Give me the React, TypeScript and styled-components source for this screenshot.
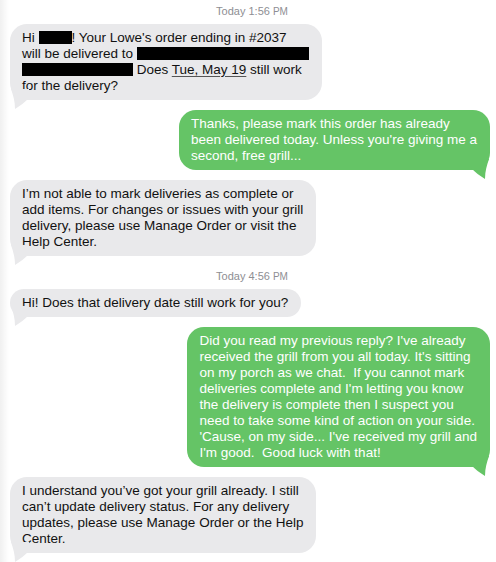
import styled, { createGlobalStyle } from 'styled-components';

const GlobalStyle = createGlobalStyle`
  html, body {
    margin: 0;
    padding: 0;
    background: #fff;
  }
  body {
    font-family: "Liberation Sans", Arial, sans-serif;
    -webkit-font-smoothing: antialiased;
  }
`;

const Thread = styled.div`
  width: 496px;
  min-height: 562px;
  box-sizing: border-box;
  padding: 5px 6px 0 10px;
  display: flex;
  flex-direction: column;
  background: linear-gradient(to right, rgba(0, 0, 0, 0.06), rgba(0, 0, 0, 0) 9px), #fff;
`;

const Stamp = styled.div`
  align-self: center;
  margin: 0 0 6px 4px;
  font-size: 11px;
  line-height: 13px;
  color: #8e8e93;

  small {
    font-size: 10px;
  }
`;

const Row = styled.div<{ $mine?: boolean; $gap?: number }>`
  display: flex;
  justify-content: ${p => (p.$mine ? 'flex-end' : 'flex-start')};
  margin-bottom: ${p => p.$gap ?? 10}px;
`;

const Bubble = styled.div<{ $mine?: boolean }>`
  position: relative;
  padding: 6px 13px 6px 12px;
  border-radius: 17px;
  background: ${p => (p.$mine ? '#65c466' : '#e9e9eb')};
  color: ${p => (p.$mine ? '#fff' : '#111')};
  font-size: 13.5px;
  line-height: 16px;
  white-space: pre;
`;

const Tail = styled.svg<{ $mine?: boolean }>`
  position: absolute;
  bottom: -9px;
  width: 20px;
  height: 20px;
  overflow: visible;
  ${p => (p.$mine ? 'right: 0; transform: scaleX(-1);' : 'left: 0;')}
`;

const Redact = styled.span<{ $w: number }>`
  display: inline-block;
  width: ${p => p.$w}px;
  height: 13px;
  background: #000;
  vertical-align: -2px;
`;

const Dated = styled.span`
  text-decoration: underline;
  text-decoration-color: #555;
  text-underline-offset: 2px;
`;

const BubbleTail = ({ mine }: { mine?: boolean }) => (
  <Tail $mine={mine} viewBox="0 0 20 20">
    <path d="M1 0 C 3 6 5 12 5 20 C 10 17 15 13 19 9 L 19 0 Z" fill={mine ? '#65c466' : '#e9e9eb'} />
  </Tail>
);

const Message = ({ mine, gap, children }: { mine?: boolean; gap?: number; children: React.ReactNode }) => (
  <Row $mine={mine} $gap={gap}>
    <Bubble $mine={mine}>
      {children}
      <BubbleTail mine={mine} />
    </Bubble>
  </Row>
);

const App = () => {
  return (
    <>
      <GlobalStyle />
      <Thread>
        <Stamp>Today 1:56 <small>PM</small></Stamp>

        <Message>
          {'Hi '}<Redact $w={33} />{"! Your Lowe's order ending in #2037\n"}
          {'will be delivered to '}<Redact $w={172} />{'\n'}
          <Redact $w={111} />{' Does '}<Dated>Tue, May 19</Dated>{' still work\n'}
          {'for the delivery?'}
        </Message>

        <Message mine>
          {"Thanks, please mark this order has already\nbeen delivered today. Unless you're giving me a\nsecond, free grill..."}
        </Message>

        <Message gap={14}>
          {'I’m not able to mark deliveries as complete or\nadd items. For changes or issues with your grill\ndelivery, please use Manage Order or visit the\nHelp Center.'}
        </Message>

        <Stamp>Today 4:56 <small>PM</small></Stamp>

        <Message>
          {'Hi! Does that delivery date still work for you?'}
        </Message>

        <Message mine>
          {"Did you read my previous reply? I've already\nreceived the grill from you all today. It's sitting\non my porch as we chat.  If you cannot mark\ndeliveries complete and I'm letting you know\nthe delivery is complete then I suspect you\nneed to take some kind of action on your side.\n'Cause, on my side... I've received my grill and\nI'm good.  Good luck with that!"}
        </Message>

        <Message>
          {'I understand you’ve got your grill already. I still\ncan’t update delivery status. For any delivery\nupdates, please use Manage Order or the Help\nCenter.'}
        </Message>
      </Thread>
    </>
  );
};

export default App;
